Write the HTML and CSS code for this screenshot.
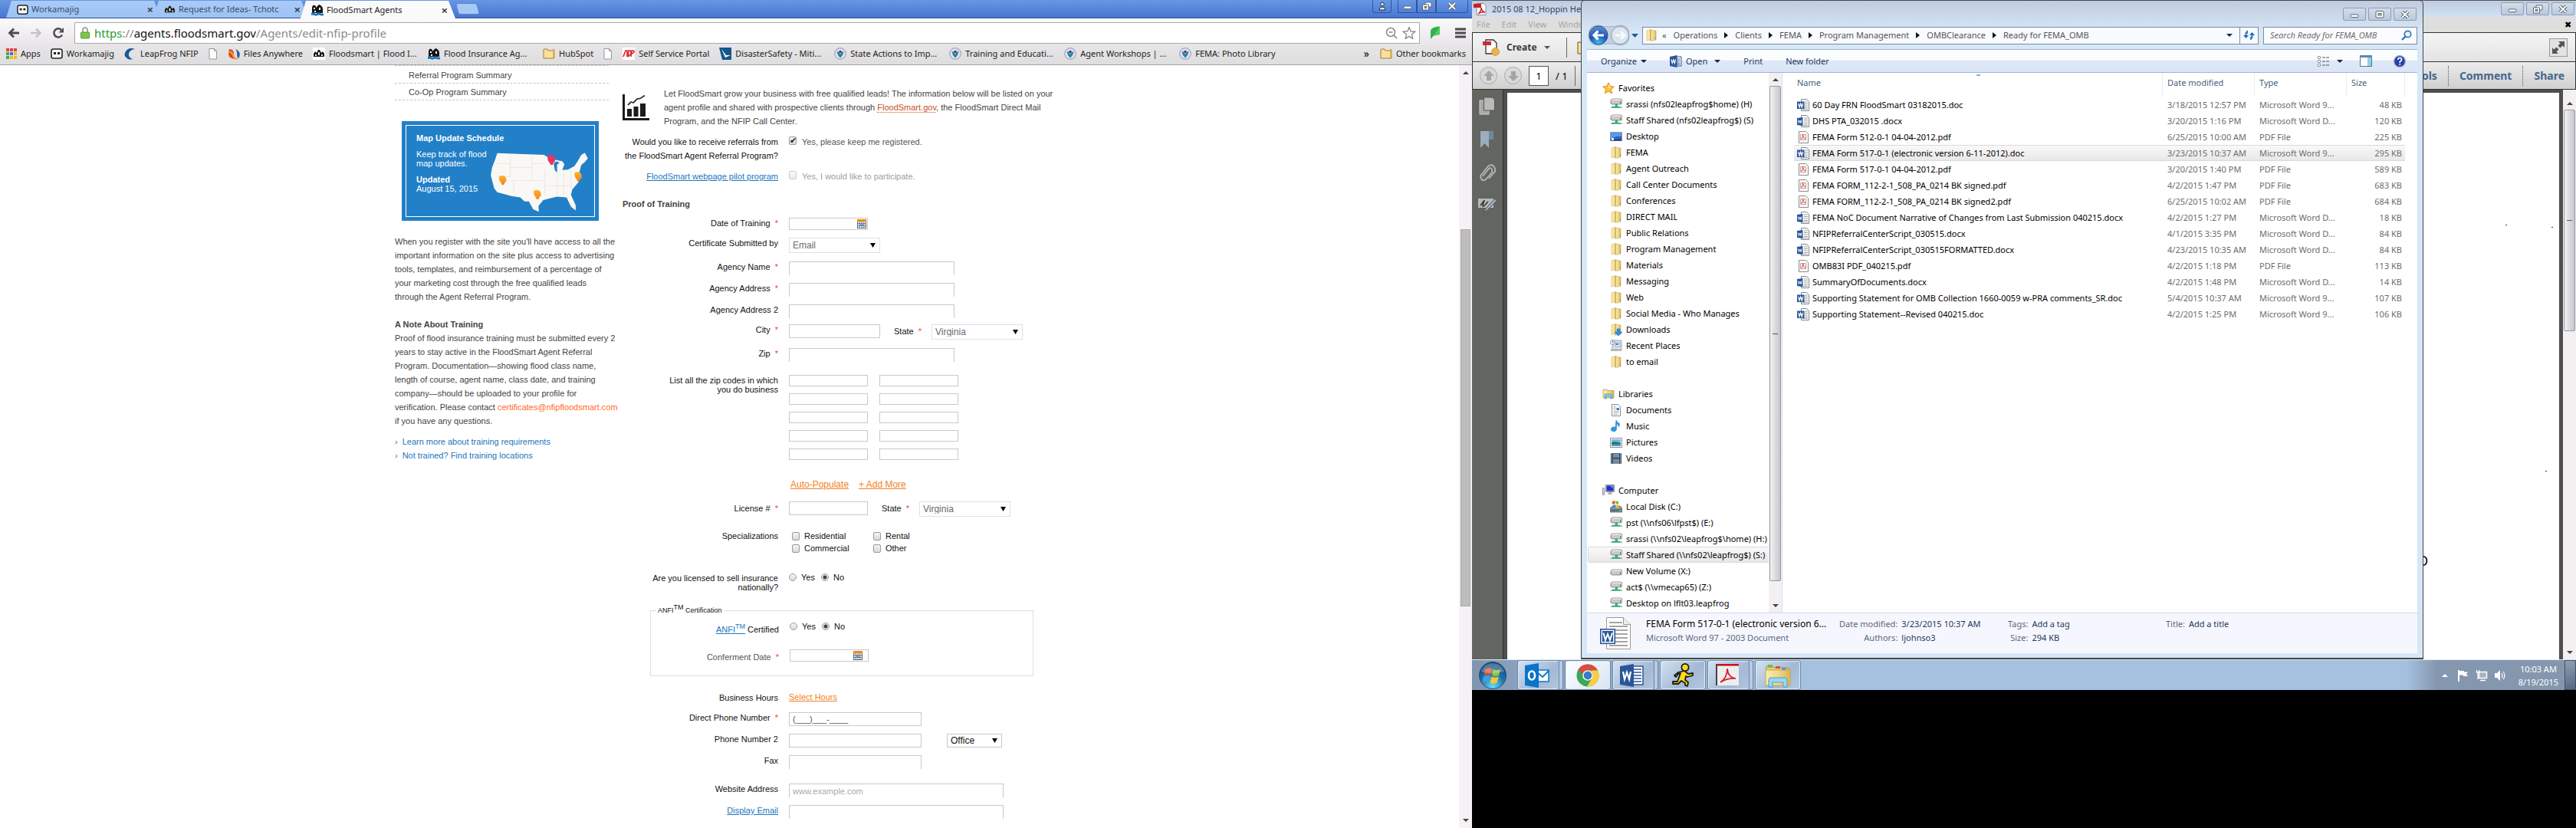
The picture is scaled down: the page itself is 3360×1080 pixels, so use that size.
FILE: index.html
```html
<!DOCTYPE html>
<html lang="en">
<head>
<meta charset="utf-8">
<title>FloodSmart Agents</title>
<link rel="stylesheet" href="styles.css">
</head>
<body>
<svg class="defs" aria-hidden="true">
  <defs>
    <linearGradient id="gold" x1="0" x2="1"><stop offset="0" stop-color="#fbedae"/><stop offset=".5" stop-color="#f0d98a"/><stop offset="1" stop-color="#d9b654"/></linearGradient>
    <radialGradient id="orb" cx=".5" cy=".9" r=".9"><stop offset="0" stop-color="#5fe0ff"/><stop offset=".5" stop-color="#2271ad"/><stop offset="1" stop-color="#14406f"/></radialGradient>
    <linearGradient id="pin" x2="0" y2="1"><stop offset="0" stop-color="#fdb32f"/><stop offset="1" stop-color="#f58220"/></linearGradient>
    <radialGradient id="backblue" cx=".5" cy=".95" r=".9"><stop offset="0" stop-color="#3fc3f5"/><stop offset=".55" stop-color="#1d55b0"/><stop offset="1" stop-color="#5d8fd6"/></radialGradient>
  </defs>
  <symbol id="i-folder" viewBox="0 0 16 16"><path d="M2 2l5-1.500v13L2 15z" fill="#f7e6a3" stroke="#d8bd62" stroke-width=".6"/><path d="M7 .5l4 1.500h3v12l-7 1.500z" fill="url(#gold)" stroke="#c9a647" stroke-width=".6"/><path d="M7 1v14" stroke="#b8963f" stroke-width=".8"/><path d="M13.500 10v3" stroke="#58a3d8"/></symbol>
  <symbol id="i-download" viewBox="0 0 16 16"><use href="#i-folder"/><path d="M9 7h4v4h3l-5 5-5-5h3z" fill="#2b8fe0" stroke="#1768ae" stroke-width=".5"/></symbol>
  <symbol id="i-bmfolder" viewBox="0 0 16 16"><path d="M1 3q0-1 1-1h4l1 2h6q1 0 1 1v9H1z" fill="#fbdf9c" stroke="#a87b30"/><path d="M13 2l2 1v11h-2" fill="#e8b95f" stroke="#a87b30" stroke-width=".7"/></symbol>
  <symbol id="i-netdrive" viewBox="0 0 16 16"><path d="M1 4q0-3 3-3h9q3 0 3 3v2q0 2-3 2H3Q0 8 1 4z" fill="#c9c9cc" stroke="#77777b" stroke-width=".8"/><path d="M2 3.500q1-1.500 3-1.500h7q2 0 3 1.500" fill="none" stroke="#fff"/><path d="M13 4h1v3h-1z" fill="#2a2"/><path d="M7 8h2.500v3H13v1.500H3V11h4z" fill="#29b573" stroke="#128a50" stroke-width=".4"/><path d="M1 12.200h2M13 12.200h3" stroke="#9aa" stroke-width="1.500"/></symbol>
  <symbol id="i-drive" viewBox="0 0 16 16"><path d="M1 9q0-3 3-3h9q3 0 3 3v2q0 2-3 2H3q-3 0-2-4z" fill="#c9c9cc" stroke="#77777b" stroke-width=".8"/><path d="M2 8.500q1-1.500 3-1.500h7q2 0 3 1.500" fill="none" stroke="#fff"/><path d="M13 9h1v3h-1z" fill="#2a2"/></symbol>
  <symbol id="i-windrive" viewBox="0 0 16 16"><path d="M0 10l3-3h10l3 3v5H0z" fill="#8c9398" stroke="#555b60" stroke-width=".7"/><path d="M1 11h14v3H1z" fill="#537687"/><path d="M3 1l3.500-1v4L3 5z" fill="#e5532d"/><path d="M7.500.5L11 1v4L7.500 4z" fill="#7db53c"/><path d="M4 6l3-1v4L4 9.500z" fill="#3f8fd8"/><path d="M7.500 5l4 1v4l-4-1z" fill="#f6c02c"/><path d="M12.500 12h1v2h-1z" fill="#5f5"/></symbol>
  <symbol id="i-desktop" viewBox="0 0 16 16"><path d="M.5 2.500h15v11H.5z" fill="#2c63c6" stroke="#8b97ac"/><path d="M1 3h14v5Q6 7 1 12z" fill="#5c97ea"/><path d="M1 12h14v1.500H1z" fill="#182d55"/><path d="M2 10h3v3H2z" fill="#e8eef8"/></symbol>
  <symbol id="i-recent" viewBox="0 0 16 16"><path d="M5 1h10v13H3V8z" fill="#dfe3e8" stroke="#8a9098" stroke-width=".8"/><path d="M7 4h6v5H7z" fill="#fff" stroke="#6a8fc0" stroke-width=".8"/><path d="M8 5h3v2H8z" fill="#3a77c9"/><path d="M1 12h14v3H1z" fill="#b5b9be"/><circle cx="3.500" cy="3.500" r="3" fill="#eef" stroke="#89a"/><path d="M3.500 1.500v2h1.500" stroke="#456" fill="none" stroke-width=".7"/></symbol>
  <symbol id="i-star" viewBox="0 0 16 16"><path d="M8 .8l2.100 4.800 5.200.5-3.900 3.500 1.200 5.200L8 12.100l-4.600 2.700 1.200-5.200L.7 6.100l5.200-.5z" fill="#fcc53a" stroke="#e08a1c"/><path d="M8 3l1.300 3.400 3 .4L8 8z" fill="#fff2b8"/></symbol>
  <symbol id="i-library" viewBox="0 0 16 16"><path d="M1 2h5l1 1.500h8V13H1z" fill="url(#gold)" stroke="#c39c3c" stroke-width=".8"/><path d="M3 14v-5q0-1 1-1h8q1 0 1 1v5h-2v-3H5v3z" fill="#8fd0ef" stroke="#3d8fc0" stroke-width=".8"/></symbol>
  <symbol id="i-doc" viewBox="0 0 16 16"><path d="M2.500.5h8l3 3v12h-11z" fill="#fff" stroke="#8c8c8c"/><path d="M4.500 3h3M4.500 5h3M4.500 7h3M4.500 9.500h7M4.500 11.500h7M4.500 13.500h5" stroke="#8d98ad" stroke-width=".8"/><path d="M8.500 5h3.500v3H8.500z" fill="#3a77c9"/></symbol>
  <symbol id="i-music" viewBox="0 0 16 16"><path d="M8 0q1 3 4 4 1 2-.500 5 0-3-3-4v7a3.600 3 0 1 1-1.500-2.600z" fill="#2f9be0" stroke="#1c6fae" stroke-width=".5"/></symbol>
  <symbol id="i-picture" viewBox="0 0 16 16"><path d="M.5 2.500h15v12H.5z" fill="#fff" stroke="#8c8c8c"/><path d="M2 4h12v5H2z" fill="#6dbbe8"/><path d="M2 8q5-2 12 1v4H2z" fill="#2c6f64"/><path d="M2 10.500h12V13H2z" fill="#4aa0c8"/></symbol>
  <symbol id="i-video" viewBox="0 0 16 16"><path d="M1 1h14v14H1z" fill="#2e3d4c"/><path d="M4 1.500h8V7H4zM4 8.500h8V15H4z" fill="#4b9fe0"/><path d="M6 3l5 2-2 2H5zM6 10l4 1 1 3H6z" fill="#c96f38"/><path d="M2.300 1v14M13.700 1v14" stroke="#fff" stroke-dasharray="1.200 1"/></symbol>
  <symbol id="i-computer" viewBox="0 0 16 16"><path d="M4.500.5h11v9h-11z" fill="#d9d9da" stroke="#85888c"/><path d="M5.500 1.500h9v7h-9z" fill="#1f31c8"/><path d="M9 1.500h5.500v4z" fill="#5d86f0"/><path d="M8 10h4l1 3H7z" fill="#b5b8bb"/><path d="M.5 4.500h2v9h-2z" fill="#ccd" stroke="#888" stroke-width=".8"/></symbol>
  <symbol id="i-word" viewBox="0 0 16 16"><path d="M5.500.5h7l3 3v12h-10z" fill="#fff" stroke="#7f8790"/><path d="M10 4h4M10 6.500h4M10 9h4M10 11.500h4M7 13.500h7" stroke="#8c949d" stroke-width=".9"/><path d="M0 3.500h9.500v9.500H0z" fill="#2a5699"/><path d="M1.800 5.800l1.300 5 1.600-4.600 1.600 4.600 1.300-5" fill="none" stroke="#fff" stroke-width="1.300"/></symbol>
  <symbol id="i-wordx" viewBox="0 0 16 16"><path d="M5.500.5h7l3 3v12h-10z" fill="#fff" stroke="#7f8790"/><path d="M9 4h5M9 6.500h5M9 9h5M9 11.500h5M7 13.500h7" stroke="#8c949d" stroke-width=".9"/><path d="M0 4l7.500-1v11L0 13z" fill="#2a5699"/><path d="M1.500 6.500l.9 4 1.300-3.500 1.300 3.500 1-4" fill="none" stroke="#fff"/></symbol>
  <symbol id="i-pdf" viewBox="0 0 16 16"><path d="M2.500.5h9l3 3v12h-12z" fill="#fbfbfb" stroke="#8c8c8c"/><path d="M4.500 4.500h7v7h-7z" fill="#fdf1f0" stroke="#c99"/><path d="M5.500 10.500q3-3 2.300-5.500Q7.300 9 11 9.500" fill="none" stroke="#cf3a34"/></symbol>
  <symbol id="i-worda" viewBox="0 0 16 16"><path d="M8 2h7v12H8z" fill="#fff" stroke="#2a5699"/><path d="M9 5h4.500M9 7.500h4.500M9 10h4.500M9 12h4.500" stroke="#2a5699"/><path d="M0 2l9.500-2v16L0 14z" fill="#2a5699"/><path d="M2 5.500l1.200 5L4.800 6l1.500 4.500 1.200-5" fill="none" stroke="#fff" stroke-width="1.200"/></symbol>
  <symbol id="i-seal" viewBox="0 0 16 16"><circle cx="8" cy="8" r="7.300" fill="#dfe0ee" stroke="#a9a3c4" stroke-width="1.200"/><path d="M3.500 5l3 1L8 9l1.500-3 3-1-1.500 5-3 3.500L5 10z" fill="#2a7f9e"/><path d="M6.500 4h3v3h-3z" fill="#3a3f6e"/></symbol>
  <symbol id="i-page" viewBox="0 0 12 16"><path d="M1 1.500h6.500l3 3V15H1z" fill="#fdfdfd" stroke="#999"/><path d="M7.500 1.500v3h3" fill="none" stroke="#999"/></symbol>
  <symbol id="i-work" viewBox="0 0 16 16"><rect x="1" y="2" width="14" height="12" rx="2.500" fill="#fff" stroke="#222" stroke-width="1.600"/><path d="M4 6h3v3H4zM9 6h3v3H9z" fill="#222"/></symbol>
  <symbol id="i-houses" viewBox="0 0 16 16"><path d="M1 12V6q0-4 2.500-4.500L6 3v2l2-2 2-2q4 1 5 5v6z" fill="#151515"/><path d="M3 5h2v2H3zM10 5h2v3h-2zM4 9h2v2H4z" fill="#fff"/><path d="M0 12q2-2 4 0t4 0 4 0 4 0v3q-2 1-4 0t-4 0-4 0-4 0z" fill="#1673b8"/></symbol>
  <symbol id="i-smart" viewBox="0 0 16 16"><path d="M1 12V8l2-3 2 2 2-4h2l2 4 2-2 2 3v4z" fill="#1b1b1b"/><path d="M3 9h2v2H3zM7 6h2v4H7zM11 9h2v2h-2z" fill="#eee"/></symbol>
  <symbol id="i-cal" viewBox="0 0 12 12"><path d="M.5.5h11v11H.5z" fill="#fff" stroke="#5b6670"/><path d="M0 0h12v3.200H0z" fill="#f08a1d"/><path d="M.5 3v9M3.200 3v9M6 3v9M8.800 3v9M11.500 3v9M0 5.700h12M0 8.500h12M0 11.500h12" stroke="#5b6670" stroke-width=".9"/><path d="M3.500 6h2.200v2.200H3.500zM6.300 6h2.200v2.200H6.300z" fill="#5aa9e0"/></symbol>
  <symbol id="i-min" viewBox="0 0 16 12"><rect x="3" y="6" width="10" height="3.500" rx="1" fill="#fff" stroke="#5b6472"/></symbol>
  <symbol id="i-max" viewBox="0 0 16 12"><rect x="3" y="1.500" width="10" height="8.500" rx="1" fill="#fff" stroke="#5b6472"/><rect x="6" y="4.500" width="4" height="2.500" fill="#b8c8dd" stroke="#5b6472"/></symbol>
  <symbol id="i-restore" viewBox="0 0 16 12"><path d="M6 1h8v6h-8z" fill="#fff" stroke="#5b6472"/><path d="M2.500 4h8v7h-8z" fill="#fff" stroke="#5b6472"/><path d="M5 6.500h3v2H5z" fill="#b8c8dd" stroke="#5b6472"/></symbol>
  <symbol id="i-close" viewBox="0 0 16 12"><path d="M4 2l8 8M12 2l-8 8" stroke="#5b6472" stroke-width="4"/><path d="M4 2l8 8M12 2l-8 8" stroke="#fff" stroke-width="1.800"/></symbol>
</svg>

<main class="monitors">
<section class="browser">
  <header class="titlebar">
    <div class="tab"><svg width="15" height="15"><use href="#i-work"/></svg><span>Workamajig</span><button aria-label="Close Workamajig">×</button></div>
    <div class="tab"><svg width="15" height="15"><use href="#i-smart"/></svg><span>Request for Ideas- Tchotc</span><button aria-label="Close Request">×</button></div>
    <div class="tab active"><svg width="16" height="16"><use href="#i-houses"/></svg><span>FloodSmart Agents</span><button aria-label="Close FloodSmart">×</button></div>
    <button class="newtab" aria-label="New tab"></button>
    <div class="chromectl">
      <button class="solo" aria-label="User"><svg width="14" height="14" viewBox="0 0 14 14"><circle cx="7" cy="4.500" r="2.300" fill="#dce8fb" stroke="#234"/><path d="M3 12q0-4 4-4t4 4z" fill="#dce8fb" stroke="#234"/></svg></button>
      <button aria-label="Minimize"><svg width="16" height="12"><use href="#i-min"/></svg></button><button aria-label="Restore"><svg width="16" height="12"><use href="#i-restore"/></svg></button><button class="wide" aria-label="Close window"><svg width="16" height="12"><use href="#i-close"/></svg></button>
    </div>
  </header>
  <nav class="toolbar">
    <button aria-label="Back"><svg width="16" height="16" viewBox="0 0 16 16"><path d="M15 8H3M8 2.500L2.500 8 8 13.500" fill="none" stroke="#4c4c4c" stroke-width="2.800"/></svg></button>
    <button aria-label="Forward"><svg width="16" height="16" viewBox="0 0 16 16"><path d="M1 8h12M8 2.500L13.500 8 8 13.500" fill="none" stroke="#c4c2c4" stroke-width="2.600"/></svg></button>
    <button aria-label="Reload"><svg width="16" height="16" viewBox="0 0 16 16"><path d="M13 10.500A5.600 5.600 0 1 1 12 4" fill="none" stroke="#4c4c4c" stroke-width="2.500"/><path d="M15 1v6.500H8.500z" fill="#4c4c4c"/></svg></button>
    <div class="omnibox">
      <svg width="12" height="16" viewBox="0 0 12 16"><path d="M3 7V4q0-3 3-3t3 3v3" fill="none" stroke="#8f9a8f" stroke-width="1.600"/><rect x=".5" y="7" width="11" height="8" rx="1" fill="#7cc64f" stroke="#549a34"/></svg>
      <span class="url"><i>https</i>://<b>agents.floodsmart.gov</b>/Agents/edit-nfip-profile</span>
      <svg width="16" height="16" viewBox="0 0 16 16"><circle cx="7" cy="7" r="5.500" fill="none" stroke="#888" stroke-width="1.500"/><path d="M4.500 7h5M11 11l4 4" stroke="#888" stroke-width="1.700"/></svg>
      <svg width="18" height="18" viewBox="0 0 16 16"><path d="M8 1.500l1.900 4.600 4.900.4-3.700 3.200 1.100 4.800L8 12l-4.200 2.500 1.100-4.800L1.200 6.500l4.900-.4z" fill="#fff" stroke="#777"/></svg>
    </div>
    <svg class="leaf" width="14" height="18" viewBox="0 0 14 18"><path d="M1 6q1-5 12-5.500V11l-8 1.500L1 17z" fill="#2eb152"/><path d="M13 .5V11l-8 1.500z" fill="#58ca5c"/></svg>
    <button class="menu" aria-label="Menu"><svg width="14" height="14" viewBox="0 0 14 14"><path d="M0 2h14M0 7h14M0 12h14" stroke="#4c4c4c" stroke-width="3"/></svg></button>
  </nav>
  <nav class="bookmarks">
    <a href="#"><svg width="14" height="14" viewBox="0 0 14 14"><path d="M0 0h4v4H0zM10 0h4v4h-4z" fill="#e2453c"/><path d="M5 0h4v4H5z" fill="#e2453c"/><path d="M0 5h4v4H0z" fill="#4aa651"/><path d="M5 5h4v4H5z" fill="#3b78e0"/><path d="M10 5h4v4h-4zM5 10h4v4H5zM10 10h4v4h-4z" fill="#f4b52b"/><path d="M0 10h4v4H0z" fill="#4aa651"/></svg>Apps</a>
    <a href="#"><svg width="16" height="16"><use href="#i-work"/></svg>Workamajig</a>
    <a href="#"><svg width="16" height="16" viewBox="0 0 16 16"><path d="M14 2Q6-1 2 5t3 10q3 1 6 0-6-2-5-7t8-6z" fill="#1b5a93"/></svg>LeapFrog NFIP</a>
    <a href="#" class="blank" aria-label="Page"><svg width="12" height="16"><use href="#i-page"/></svg></a>
    <a href="#"><svg width="16" height="16" viewBox="0 0 16 16"><path d="M2 2q6 0 6 6t6 7Q2 16 1 9q0-4 1-7z" fill="#d94e27"/><path d="M6 1q6 0 6 6t2 7q3-4 1-8T6 1z" fill="#2a5fa5"/><path d="M2 6q4 0 5 4t5 5" fill="none" stroke="#f3a52c" stroke-width="2"/></svg>Files Anywhere</a>
    <a href="#" class="cut"><svg class="white" width="16" height="16"><use href="#i-smart"/></svg>Floodsmart | Flood I...</a>
    <a href="#" class="cut"><svg width="16" height="16"><use href="#i-houses"/></svg>Flood Insurance Ag...</a>
    <a href="#"><svg width="16" height="16"><use href="#i-bmfolder"/></svg>HubSpot</a>
    <a href="#" class="blank" aria-label="Page"><svg width="12" height="16"><use href="#i-page"/></svg></a>
    <a href="#"><svg class="white" width="16" height="16" viewBox="0 0 16 16"><path d="M1 12l3-8h2v8M7 12l1-8h2q3 4-3 8M11 12l1-8h2q3 2-2 4" fill="none" stroke="#e0242b" stroke-width="1.600"/></svg>Self Service Portal</a>
    <a href="#" class="cut"><svg width="16" height="16" viewBox="0 0 16 16"><path d="M0 0h16v16H4z" fill="#12588c"/><path d="M3 2l6 8h6l-7 3z" fill="#fff"/></svg>DisasterSafety - Miti...</a>
    <a href="#" class="cut"><svg width="16" height="16"><use href="#i-seal"/></svg>State Actions to Imp...</a>
    <a href="#" class="cut"><svg width="16" height="16"><use href="#i-seal"/></svg>Training and Educati...</a>
    <a href="#" class="cut"><svg width="16" height="16"><use href="#i-seal"/></svg>Agent Workshops | ...</a>
    <a href="#"><svg width="16" height="16"><use href="#i-seal"/></svg>FEMA: Photo Library</a>
    <button class="more">»</button>
    <a href="#" class="other"><svg width="16" height="16"><use href="#i-bmfolder"/></svg>Other bookmarks</a>
  </nav>
  <div class="viewport">
    <div class="site">
      <aside class="side">
        <ul class="subnav"><li>Referral Program Summary</li><li>Co-Op Program Summary</li></ul>
        <div class="mapcard"><div class="mapinner">
          <div class="maptext"><strong>Map Update Schedule</strong><p>Keep track of flood map updates.</p><p><b>Updated</b><br>August 15, 2015</p></div>
          <svg width="130" height="80" viewBox="245 340 230 235" preserveAspectRatio="none"><path d="M262 345L370 352 382 364 400 372 412 376 417 388 412 410 425 408 440 395 448 375 456 352 464 344 471 365 464 380 456 390 452 415 447 440 450 455 435 485 432 505 443 545 443 565 432 550 422 515 400 512 385 518 368 525 357 548 358 570 345 560 335 530 325 530 315 515 295 510 262 495 255 480 247 430 250 400 257 370z" fill="#faf8f5"/><path d="M392 385l6-8 8 4-6 8v30l-5-8z" fill="#2280c8"/><path d="M262 385h30v-38M292 385v50h-30M292 400h50v-50M342 400v50h-50M300 450v50M342 450h30v60M372 385h-30M372 450v-40M372 470h60M400 420v90M415 415v90M432 410v70" stroke="#e6e0da" stroke-width="1.500" fill="none"/><g fill="url(#pin)"><path id="mp" d="M273 467q-2-11-5-14-6-22 5-22t10 22q-4 3-6 14z"/><use href="#mp" x="80" y="55"/><use href="#mp" x="174" y="-14"/></g><path d="M385 390q-2-9-5-13-6-25 6-25t9 25q-4 4-5 13z" fill="#e6355f"/></svg>
        </div></div>
        <p>When you register with the site you'll have access to all the<br>important information on the site plus access to advertising<br>tools, templates, and reimbursement of a percentage of<br>your marketing cost through the free qualified leads<br>through the Agent Referral Program.</p>
        <h2>A Note About Training</h2>
        <p>Proof of flood insurance training must be submitted every 2<br>years to stay active in the FloodSmart Agent Referral<br>Program. Documentation—showing flood class name,<br>length of course, agent name, class date, and training<br>company—should be uploaded to your profile for<br>verification. Please contact <a class="orange" href="#">certificates@nfipfloodsmart.com</a><br>if you have any questions.</p>
        <ul class="links"><li><a href="#">Learn more about training requirements</a></li><li><a href="#">Not trained? Find training locations</a></li></ul>
      </aside>
      <form class="profile">
        <div class="intro">
          <svg width="35" height="34" viewBox="0 0 35 34"><path d="M1.500 0v32.500H35" fill="none" stroke="#1b1b1b" stroke-width="3"/><path d="M6 19h6v10H6zM14.500 16h6v13h-6zM23 12h7v17h-7z" fill="#1b1b1b"/><path d="M7 14l4-4 3 1 5-5 4-.5 6-4" fill="none" stroke="#333" stroke-width="1.800"/></svg>
          <p>Let FloodSmart grow your business with free qualified leads! The information below will be listed on your<br>agent profile and shared with prospective clients through <a class="dotted" href="#">FloodSmart.gov</a>, the FloodSmart Direct Mail<br>Program, and the NFIP Call Center.</p>
        </div>
        <div class="row tall"><label for="keep">Would you like to receive referrals from<br>the FloodSmart Agent Referral Program?</label><div class="opts"><input type="checkbox" id="keep" checked><span class="gray">Yes, please keep me registered.</span></div></div>
        <div class="row tall pilot"><a class="lab link" href="#">FloodSmart webpage pilot program</a><div class="opts"><input type="checkbox" id="pilot" disabled><label class="faded" for="pilot">Yes, I would like to participate.</label></div></div>
        <h3>Proof of Training</h3>
        <div class="row short"><label for="dot">Date of Training <em>*</em></label><div class="date"><input class="w-s" id="dot"><svg width="12" height="12"><use href="#i-cal"/></svg></div></div>
        <div class="row loose"><label for="cert">Certificate Submitted by</label><select class="w-m" id="cert"><option>Email</option></select></div>
        <div class="row"><label for="an">Agency Name <em>*</em></label><input class="w-l open" id="an"></div>
        <div class="row"><label for="aa">Agency Address <em>*</em></label><input class="w-l open" id="aa"></div>
        <div class="row short"><label for="a2">Agency Address 2</label><input class="w-l open" id="a2"></div>
        <div class="row loose"><label for="city">City <em>*</em></label><div class="inline"><input class="w-m" id="city"><label class="state" for="st1">State <em>*</em></label><select class="w-m" id="st1"><option>Virginia</option></select></div></div>
        <div class="row zip"><label for="zip">Zip <em>*</em></label><input class="w-l open" id="zip"></div>
        <div class="row ziprow"><label for="z1">List all the zip codes in which you do business</label><div class="zips"><input id="z1"><input aria-label="Zip 2"><input aria-label="Zip 3"><input aria-label="Zip 4"><input aria-label="Zip 5"><input aria-label="Zip 6"><input aria-label="Zip 7"><input aria-label="Zip 8"><input aria-label="Zip 9"><input aria-label="Zip 10"></div></div>
        <div class="row"><span></span><div class="ziplinks"><a class="act" href="#">Auto-Populate</a><a class="act" href="#">+ Add More</a></div></div>
        <div class="row lic"><label for="lic">License # <em>*</em></label><div class="inline"><input class="w-s" id="lic"><label class="state" for="st2">State <em>*</em></label><select class="w-m" id="st2"><option>Virginia</option></select></div></div>
        <div class="row spec"><span class="lab">Specializations</span><div class="checks"><label><input type="checkbox">Residential</label><label><input type="checkbox">Rental</label><label><input type="checkbox">Commercial</label><label><input type="checkbox">Other</label></div></div>
        <div class="row nat"><span class="lab">Are you licensed to sell insurance<br>nationally?</span><div class="radios"><label><input type="radio" name="nat">Yes</label><label><input type="radio" name="nat" checked>No</label></div></div>
        <fieldset><legend>ANFI<sup>TM</sup> Certification</legend>
          <div class="row"><span class="lab"><a class="link" href="#">ANFI<sup>TM</sup></a> Certified</span><div class="radios"><label><input type="radio" name="anfi">Yes</label><label><input type="radio" name="anfi" checked>No</label></div></div>
          <div class="row"><label class="gray" for="conf">Conferment Date <em>*</em></label><div class="date conf"><input class="w-s" id="conf"><svg width="12" height="12"><use href="#i-cal"/></svg></div></div>
        </fieldset>
        <div class="row short"><span class="lab">Business Hours</span><a class="act small" href="#">Select Hours</a></div>
        <div class="row"><label for="dp">Direct Phone Number <em>*</em></label><input class="w-p" id="dp" value="(___)___-____"></div>
        <div class="row"><label for="p2">Phone Number 2</label><div class="inline phone"><input class="w-p" id="p2"><select aria-label="Phone type"><option>Office</option></select></div></div>
        <div class="row fax"><label for="fax">Fax</label><input class="w-p open" id="fax"></div>
        <div class="row"><label for="web">Website Address</label><input class="w-x open" id="web" placeholder="www.example.com"></div>
        <div class="row last"><a class="lab link" href="#">Display Email</a><input class="w-x open" aria-label="Display Email"></div>
      </form>
    </div>
    <div class="webscroll"><i class="up"></i><b></b><i class="down"></i></div>
  </div>
</section>

<section class="desktop">
  <div class="workspace">
    <section class="acrobat">
      <header class="a-title"><svg width="17" height="16" viewBox="0 0 17 16"><path d="M4 .5h9l3 3v12H4z" fill="#fff" stroke="#888"/><path d="M0 1h10v5H0z" fill="#c8202a"/><path d="M6 14q4-3 4-8 1 5 5 6-5-1-9 2z" fill="none" stroke="#c8202a" stroke-width="1.400"/></svg><span>2015 08 12_Hoppin Hearing</span>
        <div class="winbtns"><button aria-label="Minimize"><svg width="16" height="12"><use href="#i-min"/></svg></button><button aria-label="Restore"><svg width="16" height="12"><use href="#i-restore"/></svg></button><button aria-label="Close"><svg width="16" height="12"><use href="#i-close"/></svg></button></div></header>
      <nav class="a-menu"><span>File</span><span>Edit</span><span>View</span><span>Window</span><button aria-label="Close document">✖</button></nav>
      <div class="a-bar"><svg width="22" height="22" viewBox="0 0 22 22"><path d="M4 1h10l4 4v14H4z" fill="#fff" stroke="#333" stroke-width="1.300"/><path d="M0 3h11v5H0z" fill="#cf2b33"/><circle cx="16.500" cy="16.500" r="5" fill="#e9b44a" stroke="#bb8425" stroke-dasharray="2 1"/></svg><strong>Create</strong><i class="caret"></i><u></u><svg width="20" height="20" viewBox="0 0 20 20"><path d="M1 3h6l2 2h9v13H1z" fill="#f3e2a0" stroke="#665520"/></svg>
        <button class="expand" aria-label="Read mode"><svg width="20" height="20" viewBox="0 0 20 20"><path d="M10 2h8v8l-2.500-2.500-3 3-3-3 3-3zM10 18H2v-8l2.500 2.500 3-3 3 3-3 3z" fill="#555"/></svg></button></div>
      <div class="a-bar second"><button class="round" aria-label="Previous page"><svg width="14" height="14" viewBox="0 0 14 14"><path d="M7 0l7 7h-4v6H4V7H0z" fill="#a5a5a5"/></svg></button><button class="round" aria-label="Next page"><svg width="14" height="14" viewBox="0 0 14 14"><path d="M7 14l7-7h-4V1H4v6H0z" fill="#a5a5a5"/></svg></button><input aria-label="Page number" value="1"><span>/ 1</span><u></u>
        <div class="a-tabs"><button>Tools</button><button>Comment</button><button>Share</button></div></div>
      <div class="a-body">
        <nav class="a-side">
          <svg width="22" height="24" viewBox="0 0 22 24"><path d="M1 5h12v18H1z" fill="#a8aaa7" stroke="#d0d0d0"/><path d="M6.500 1h11l3 3v14h-14z" fill="#b9bbb8" stroke="#555"/></svg>
          <svg width="22" height="24" viewBox="0 0 22 24"><path d="M10 1h9v11h-7z" fill="#6f8798"/><path d="M2 1h11v22l-5.500-6L2 23z" fill="#9aaebb"/></svg>
          <svg width="22" height="24" viewBox="0 0 22 24"><path d="M5 16L13 6q3-2 4 1t-1 5l-7 8q-4 3-6-1t1-6l8-10q5-4 8 1t-1 8l-6 7" fill="none" stroke="#b3b5b2" stroke-width="1.800"/></svg>
          <svg width="24" height="20" viewBox="0 0 24 20"><path d="M0 1h20v12H0z" fill="#b6b8b5"/><path d="M3 10q6-8 5-6T6 10t7-5" fill="none" stroke="#333" stroke-width="1.500"/><path d="M22 1L10 14l-3 5 5-3L24 4z" fill="#9db0bf" stroke="#556"/></svg>
        </nav>
        <div class="a-page"><span class="mark m1"></span><span class="mark m2"></span><span class="mark m3"></span><span class="glyph">O</span></div>
        <div class="w7scroll a-scroll"><i class="up"></i><b></b><i class="down"></i></div>
      </div>
    </section>

    <section class="explorer">
      <header class="e-title"><div class="winbtns"><button aria-label="Minimize"><svg width="16" height="12"><use href="#i-min"/></svg></button><button aria-label="Maximize"><svg width="16" height="12"><use href="#i-max"/></svg></button><button aria-label="Close"><svg width="16" height="12"><use href="#i-close"/></svg></button></div></header>
      <div class="e-addr">
        <svg width="66" height="28" viewBox="0 0 66 28"><path d="M14 1q14 4 28 0 12 0 12 13T42 27q-14-4-28 0Q1 27 1 14T14 1z" fill="#c4d0df" stroke="#a0aec0"/><circle cx="14" cy="14" r="12" fill="url(#backblue)" stroke="#274a86"/><path d="M21 14H9M13.500 8.500L8 14l5.500 5.500" fill="none" stroke="#fff" stroke-width="3.200"/><circle cx="42" cy="14" r="11.500" fill="#dde5ee" stroke="#8b9bb0"/><path d="M36 14h11M43 9l5 5-5 5" fill="none" stroke="#f7fafd" stroke-width="3"/><path d="M57 12h9l-4.500 5z" fill="#1f5b98"/></svg>
        <div class="crumbs"><svg width="16" height="16"><use href="#i-folder"/></svg><span>«</span><span>Operations</span><i></i><span>Clients</span><i></i><span>FEMA</span><i></i><span>Program Management</span><i></i><span>OMBClearance</span><i></i><span>Ready for FEMA_OMB</span><b class="caret navy"></b><button aria-label="Refresh"><svg width="15" height="14" viewBox="0 0 15 14"><path d="M5 1v3H3.500v4M10 13v-3h1.500V6" fill="none" stroke="#2a7fd0" stroke-width="2"/><path d="M0 7h7l-3.500 4zM8 7h7l-3.500-4z" fill="#2166b8"/></svg></button></div>
        <div class="search"><input aria-label="Search" placeholder="Search Ready for FEMA_OMB"><svg width="14" height="14" viewBox="0 0 14 14"><circle cx="8.500" cy="5.500" r="4.200" fill="#eaf5ff" stroke="#2f75b8" stroke-width="1.700"/><path d="M5.500 8.500L1 13" stroke="#2f75b8" stroke-width="2.400"/></svg></div>
      </div>
      <nav class="e-cmd"><button>Organize<i class="caret navy"></i></button><button><svg width="16" height="16"><use href="#i-worda"/></svg>Open<i class="caret navy"></i></button><button>Print</button><button>New folder</button>
        <div class="e-right"><svg width="15" height="14" viewBox="0 0 15 14"><path d="M.5.500h3v3h-3zM.5 5.500h3v3h-3zM.5 10.500h3v3h-3z" fill="#fff" stroke="#999"/><path d="M6 2h9M6 7h9M6 12h9" stroke="#555" stroke-dasharray="4 1"/></svg><i class="caret navy"></i><svg class="pane" width="16" height="15" viewBox="0 0 16 15"><path d="M.5.500h15v14H.5z" fill="#fff" stroke="#5d7187"/><path d="M0 0h16v3H0z" fill="#5d87b4"/><path d="M10 3h5v11h-5z" fill="#8fd0ec"/></svg><svg width="16" height="16" viewBox="0 0 16 16"><circle cx="8" cy="8" r="7.300" fill="#2240ae" stroke="#97a0b5" stroke-width="1.400"/><path d="M5.700 6q.2-2.500 2.500-2.500T10.600 6Q10.300 7.500 8.200 8.500V10" fill="none" stroke="#fff" stroke-width="1.700"/><path d="M7.400 11h1.700v1.700H7.400z" fill="#fff"/></svg></div></nav>
      <div class="e-body">
        <ul class="tree">
          <li class="h"><svg width="16" height="16"><use href="#i-star"/></svg>Favorites</li>
          <li><svg width="16" height="16"><use href="#i-netdrive"/></svg>srassi (nfs02leapfrog$home) (H)</li>
          <li><svg width="16" height="16"><use href="#i-netdrive"/></svg>Staff Shared (nfs02leapfrog$) (S)</li>
          <li><svg width="16" height="16"><use href="#i-desktop"/></svg>Desktop</li>
          <li><svg width="16" height="16"><use href="#i-folder"/></svg>FEMA</li>
          <li><svg width="16" height="16"><use href="#i-folder"/></svg>Agent Outreach</li>
          <li><svg width="16" height="16"><use href="#i-folder"/></svg>Call Center Documents</li>
          <li><svg width="16" height="16"><use href="#i-folder"/></svg>Conferences</li>
          <li><svg width="16" height="16"><use href="#i-folder"/></svg>DIRECT MAIL</li>
          <li><svg width="16" height="16"><use href="#i-folder"/></svg>Public Relations</li>
          <li><svg width="16" height="16"><use href="#i-folder"/></svg>Program Management</li>
          <li><svg width="16" height="16"><use href="#i-folder"/></svg>Materials</li>
          <li><svg width="16" height="16"><use href="#i-folder"/></svg>Messaging</li>
          <li><svg width="16" height="16"><use href="#i-folder"/></svg>Web</li>
          <li><svg width="16" height="16"><use href="#i-folder"/></svg>Social Media - Who Manages</li>
          <li><svg width="16" height="16"><use href="#i-download"/></svg>Downloads</li>
          <li><svg width="16" height="16"><use href="#i-recent"/></svg>Recent Places</li>
          <li><svg width="16" height="16"><use href="#i-folder"/></svg>to email</li>
          <li class="h gap"><svg width="16" height="16"><use href="#i-library"/></svg>Libraries</li>
          <li><svg width="16" height="16"><use href="#i-doc"/></svg>Documents</li>
          <li><svg width="16" height="16"><use href="#i-music"/></svg>Music</li>
          <li><svg width="16" height="16"><use href="#i-picture"/></svg>Pictures</li>
          <li><svg width="16" height="16"><use href="#i-video"/></svg>Videos</li>
          <li class="h gap"><svg width="16" height="16"><use href="#i-computer"/></svg>Computer</li>
          <li><svg width="16" height="16"><use href="#i-windrive"/></svg>Local Disk (C:)</li>
          <li><svg width="16" height="16"><use href="#i-netdrive"/></svg>pst (\\nfs06\lfpst$) (E:)</li>
          <li><svg width="16" height="16"><use href="#i-netdrive"/></svg>srassi (\\nfs02\leapfrog$\home) (H:)</li>
          <li class="sel"><svg width="16" height="16"><use href="#i-netdrive"/></svg>Staff Shared (\\nfs02\leapfrog$) (S:)</li>
          <li><svg width="16" height="16"><use href="#i-drive"/></svg>New Volume (X:)</li>
          <li><svg width="16" height="16"><use href="#i-netdrive"/></svg>act$ (\\vmecap65) (Z:)</li>
          <li><svg width="16" height="16"><use href="#i-netdrive"/></svg>Desktop on lflt03.leapfrog</li>
        </ul>
        <div class="w7scroll e-scroll"><i class="up"></i><b></b><i class="down"></i></div>
        <div class="files">
          <table>
            <colgroup><col><col class="c-date"><col class="c-type"><col class="c-size"></colgroup>
            <thead><tr><th>Name</th><th>Date modified</th><th>Type</th><th>Size</th></tr></thead>
            <tbody>
              <tr><td><svg width="16" height="16"><use href="#i-word"/></svg>60 Day FRN FloodSmart 03182015.doc</td><td>3/18/2015 12:57 PM</td><td>Microsoft Word 9...</td><td>48 KB</td></tr>
              <tr><td><svg width="16" height="16"><use href="#i-wordx"/></svg>DHS PTA_032015 .docx</td><td>3/20/2015 1:16 PM</td><td>Microsoft Word D...</td><td>120 KB</td></tr>
              <tr><td><svg width="16" height="16"><use href="#i-pdf"/></svg>FEMA Form 512-0-1 04-04-2012.pdf</td><td>6/25/2015 10:00 AM</td><td>PDF File</td><td>225 KB</td></tr>
              <tr class="sel"><td><svg width="16" height="16"><use href="#i-word"/></svg>FEMA Form 517-0-1 (electronic version 6-11-2012).doc</td><td>3/23/2015 10:37 AM</td><td>Microsoft Word 9...</td><td>295 KB</td></tr>
              <tr><td><svg width="16" height="16"><use href="#i-pdf"/></svg>FEMA Form 517-0-1 04-04-2012.pdf</td><td>3/20/2015 1:40 PM</td><td>PDF File</td><td>589 KB</td></tr>
              <tr><td><svg width="16" height="16"><use href="#i-pdf"/></svg>FEMA FORM_112-2-1_508_PA_0214 BK signed.pdf</td><td>4/2/2015 1:47 PM</td><td>PDF File</td><td>683 KB</td></tr>
              <tr><td><svg width="16" height="16"><use href="#i-pdf"/></svg>FEMA FORM_112-2-1_508_PA_0214 BK signed2.pdf</td><td>6/25/2015 10:02 AM</td><td>PDF File</td><td>684 KB</td></tr>
              <tr><td><svg width="16" height="16"><use href="#i-wordx"/></svg>FEMA NoC Document Narrative of Changes from Last Submission 040215.docx</td><td>4/2/2015 1:27 PM</td><td>Microsoft Word D...</td><td>18 KB</td></tr>
              <tr><td><svg width="16" height="16"><use href="#i-wordx"/></svg>NFIPReferralCenterScript_030515.docx</td><td>4/1/2015 3:35 PM</td><td>Microsoft Word D...</td><td>84 KB</td></tr>
              <tr><td><svg width="16" height="16"><use href="#i-wordx"/></svg>NFIPReferralCenterScript_030515FORMATTED.docx</td><td>4/23/2015 10:35 AM</td><td>Microsoft Word D...</td><td>84 KB</td></tr>
              <tr><td><svg width="16" height="16"><use href="#i-pdf"/></svg>OMB83I PDF_040215.pdf</td><td>4/2/2015 1:18 PM</td><td>PDF File</td><td>113 KB</td></tr>
              <tr><td><svg width="16" height="16"><use href="#i-wordx"/></svg>SummaryOfDocuments.docx</td><td>4/2/2015 1:48 PM</td><td>Microsoft Word D...</td><td>14 KB</td></tr>
              <tr><td><svg width="16" height="16"><use href="#i-word"/></svg>Supporting Statement for OMB Collection 1660-0059 w-PRA comments_SR.doc</td><td>5/4/2015 10:37 AM</td><td>Microsoft Word 9...</td><td>107 KB</td></tr>
              <tr><td><svg width="16" height="16"><use href="#i-word"/></svg>Supporting Statement--Revised 040215.doc</td><td>4/2/2015 1:25 PM</td><td>Microsoft Word 9...</td><td>106 KB</td></tr>
            </tbody>
          </table>
        </div>
      </div>
      <footer class="e-info">
        <svg width="40" height="42" viewBox="0 0 40 42"><path d="M8.500.5h22l9 9v32h-31z" fill="#fff" stroke="#999"/><path d="M30.500.5v9h9" fill="#eee" stroke="#999"/><path d="M12 7h17M12 12h24M20 17h16M20 22h16M20 27h16M20 32h16M12 37h24" stroke="#888" stroke-width="1.300"/><rect x=".8" y="15.800" width="18.500" height="18.500" fill="#fff" stroke="#2a5699" stroke-width="1.600"/><path d="M3 18h14v14H3z" fill="#2a5699"/><path d="M4.500 20.500L7 30l3-8 3 8 3-9.500" fill="none" stroke="#fff" stroke-width="2"/></svg>
        <div class="i-name"><strong>FEMA Form 517-0-1 (electronic version 6...</strong><span>Microsoft Word 97 - 2003 Document</span></div>
        <dl class="i-date"><dt>Date modified:</dt><dd>3/23/2015 10:37 AM</dd><dt>Authors:</dt><dd>ljohnso3</dd></dl>
        <dl class="i-tags"><dt>Tags:</dt><dd>Add a tag</dd><dt>Size:</dt><dd>294 KB</dd></dl>
        <dl><dt>Title:</dt><dd>Add a title</dd></dl>
      </footer>
    </section>
  </div>
  <footer class="taskbar">
    <button class="orb" aria-label="Start"><svg width="38" height="38" viewBox="0 0 38 38"><circle cx="19" cy="19" r="17.500" fill="url(#orb)" stroke="#2b4d70"/><path d="M9 11q5-3 9-.5l-1.500 8q-4-2-9 .5z" fill="#e8532a"/><path d="M19.500 11q5 2.500 9.500 0l-2 8q-4 2.500-9-.5z" fill="#8cc63c"/><path d="M7 20.500q5-2.500 9-.5l-2 8q-4-2-8.500.5z" fill="#3fa0e0"/><path d="M17.500 20.500q5 2.500 9.500 0l-2.500 8q-5 2.500-9-.5z" fill="#fcc52c"/><path d="M4 14Q8 3 19 3t15 11q-15 4-30 0z" fill="#fff" opacity=".25"/></svg></button>
    <button class="app stack" aria-label="Outlook"><svg width="32" height="32" viewBox="0 0 32 32"><path d="M15 9h16v15H15z" fill="#fff" stroke="#0a74c8" stroke-width="1.500"/><path d="M15 11l8 7 8-8" fill="none" stroke="#0a74c8" stroke-width="1.800"/><path d="M0 3l18-3v32L0 29z" fill="#0a74c8"/><ellipse cx="9" cy="16" rx="4" ry="5.500" fill="none" stroke="#fff" stroke-width="2.600"/></svg></button>
    <button class="app on" aria-label="Chrome"><svg width="30" height="30" viewBox="0 0 30 30"><circle cx="15" cy="15" r="14.500" fill="#3ba757"/><path d="M2.500 7.500A14.500 14.500 0 0 1 28 8.500H15q-5 0-6.500 4.500z" fill="#dd4b3e"/><path d="M28 8.500A14.500 14.500 0 0 1 14 29.500L21 18q2-5-2-9.500z" fill="#fccd3c"/><circle cx="15" cy="15" r="6.800" fill="#fff"/><circle cx="15" cy="15" r="5.400" fill="#3b7cc9"/></svg></button>
    <button class="app stack" aria-label="Word"><svg width="32" height="30" viewBox="0 0 32 30"><path d="M16 3h14v24H16z" fill="#fff" stroke="#2a5699" stroke-width="1.500"/><path d="M18 7h10M18 11h10M18 15h10M18 19h10M18 23h10" stroke="#2a5699" stroke-width="1.600"/><path d="M0 3l18-3v30L0 27z" fill="#2a5699"/><path d="M4 10l2 10 3-9 3 9 2-10" fill="none" stroke="#fff" stroke-width="2.200"/></svg></button>
    <button class="app" aria-label="AIM"><svg width="30" height="32" viewBox="0 0 30 32"><g fill="#ffd91c" stroke="#1a1a1a" stroke-width="1.800" stroke-linejoin="round"><path d="M9 12l8-2 5 4 6-1v3l-7 2-2-1-1 5 4 3-1 5-3-1v-3l-5-3-4 4H2v-3h6l4-11-3 1-3 4-2-2z"/><circle cx="18" cy="5.500" r="4.600"/></g></svg></button>
    <button class="app stack" aria-label="Acrobat"><svg width="30" height="30" viewBox="0 0 30 30"><path d="M0 0h30v28H0z" fill="#eee"/><path d="M0 0h30v2.500H0z" fill="#c8101c"/><path d="M0 0h2v28H0z" fill="#444"/><path d="M6 24q9-6 9-18 1 12 11 13-11-1-20 5z" fill="none" stroke="#d2202c" stroke-width="1.700"/></svg></button>
    <button class="app" aria-label="Explorer"><svg width="34" height="32" viewBox="0 0 34 32"><path d="M2 4h8l2 2h19v22H2z" fill="#e8cf78" stroke="#b3923f"/><path d="M4 2h6v4H4z" fill="#6fbf4a"/><path d="M14 4h6v3h-6z" fill="#d8553a"/><path d="M22 6h6v3h-6z" fill="#4a9bdc"/><path d="M1 9h32v20H1z" fill="url(#gold)" stroke="#c9a647"/><path d="M5 31v-9q0-3 3-3h18q3 0 3 3v9h-5v-6H10v6z" fill="#9bd7f2" stroke="#4d9cc9"/></svg></button>
    <div class="tray">
      <i class="up"></i>
      <svg width="16" height="16" viewBox="0 0 16 16"><path d="M2 1v15" stroke="#fff" stroke-width="2"/><path d="M3 2h6v1.500h5L12 6l2 3H8V7.500H3z" fill="#fff"/></svg>
      <svg width="16" height="16" viewBox="0 0 16 16"><path d="M4.500 3.500h10v8h-10z" fill="#a9b2bf" stroke="#fff" stroke-width="1.500"/><path d="M6 14.500h7M1.500 1v3h3V1M3 4v9" stroke="#fff" stroke-width="1.300" fill="none"/></svg>
      <svg width="16" height="16" viewBox="0 0 16 16"><path d="M1 5h3l4-4v14l-4-4H1z" fill="#fff"/><path d="M10 5q2 3 0 6M12 3q4 5 0 10" stroke="#fff" fill="none" stroke-width="1.200"/></svg>
      <time>10:03 AM<br>8/19/2015</time>
      <button class="peek" aria-label="Show desktop"></button>
    </div>
  </footer>
</section>
</main>
</body>
</html>
```
FILE: styles.css
```css
* { box-sizing: border-box; }
body { margin: 0; background: #000; font: 11px/14px "Noto Sans", "Open Sans", sans-serif; color: #000; }
button { font: inherit; color: inherit; padding: 0; border: 0; background: none; }
input, select { font: inherit; }
ul, dl, dd, p, h2, h3 { margin: 0; padding: 0; list-style: none; }
svg { display: block; flex: none; }
.defs { position: absolute; width: 0; height: 0; }
.monitors { display: grid; grid-template-columns: 4fr 3fr; align-items: start; }

/* browser chrome */
.browser { display: flex; flex-direction: column; min-height: 100vh; min-width: 0; background: #fff; }
.titlebar { display: flex; align-items: flex-end; height: 24px; padding-left: 8px; background: linear-gradient(#6797e2, #4775d3); border-bottom: 1px solid #2c4f98; }
.tab { display: flex; align-items: center; gap: 4px; width: 202px; height: 22px; margin-right: -10px; padding: 0 10px 0 14px; background: linear-gradient(#a9cbf7, #9cc3f5); clip-path: polygon(7px 0, 193px 0, 100% 100%, 0 100%); white-space: nowrap; color: #3d4a60; }
.tab span { flex: 1; overflow: hidden; }
.tab button { font-size: 15px; font-weight: 700; color: #444; }
.tab.active { background: #fbfafb; height: 23px; margin-bottom: -1px; color: #222; }
.newtab { width: 28px; height: 15px; margin: 0 0 4px 12px; background: #a5c8f6; border: 1px solid #5a86cf; border-radius: 3px; transform: skewX(15deg); }
.chromectl { display: flex; align-self: flex-start; margin-left: auto; padding-right: 5px; }
.chromectl button { display: flex; align-items: center; justify-content: center; width: 25px; height: 17px; border: 1px solid #30549f; border-top: 0; }
.chromectl button.wide { width: 42px; border-radius: 0 0 4px 0; }
.chromectl .solo { margin-right: 8px; border-radius: 0 0 4px 4px; }
.toolbar { display: flex; align-items: center; height: 34px; padding: 3px 8px 0 10px; gap: 13px; background: linear-gradient(#fbfafb, #eae6ea); }
.omnibox { display: flex; align-items: center; gap: 6px; flex: 1; height: 28px; padding: 0 4px 0 7px; background: #fff; border: 1px solid #a9a9a9; }
.url { flex: 1; font-size: 15px; line-height: 20px; color: #8a8a8a; }
.url i { font-style: normal; color: #2a9a2a; }
.url b { font-weight: 400; color: #111; }
.menu { margin-left: 6px; }
.bookmarks { display: flex; align-items: center; height: 27px; padding: 0 8px 2px; background: linear-gradient(#e8e5e8, #dedede); border-bottom: 1px solid #a5a5a5; white-space: nowrap; }
.bookmarks a { display: flex; align-items: center; gap: 5px; padding-right: 13px; color: #222; text-decoration: none; }
.bookmarks .blank { padding-right: 13px; }
.bookmarks .cut { width: 150px; padding-right: 0; }
.bookmarks .white { background: #fff; }
.bookmarks .more { margin-left: auto; padding-right: 14px; font-size: 14px; }
.bookmarks .other { padding-right: 0; }

/* page */
.viewport { flex: 1; display: flex; font-family: "Liberation Sans", Arial, sans-serif; line-height: 18px; color: #444; }
.site { flex: 1; display: flex; justify-content: center; gap: 18px; }
.side { width: 279px; white-space: nowrap; }
.subnav li { height: 22px; line-height: 22px; padding-left: 18px; border-bottom: 1px dashed #c4c4c4; }
.subnav { padding-top: 1px; border-top: 1px dashed #c4c4c4; }
.mapcard { width: 257px; height: 130px; margin: 27px 0 18px 9px; padding: 5px; background: #2280c8; color: #fff; line-height: 12px; }
.mapinner { display: flex; height: 100%; padding: 10px 0 0 13px; border: 1px solid #fff; }
.maptext { width: 96px; }
.maptext p { margin-top: 9px; white-space: normal; }
.mapinner svg { margin-top: 24px; }
.side h2 { margin-top: 18px; font-size: 11px; font-weight: 700; }
.orange { color: #ff6a2b; text-decoration: none; }
.links { margin-top: 9px; }
.links a { color: #2475bd; text-decoration: none; }
.links a::before { content: "›"; padding-right: 6px; }
.profile { width: 576px; padding-top: 28px; }
.intro { display: flex; gap: 19px; white-space: nowrap; }
.intro svg { margin-top: 10px; }
.dotted { color: #c9501c; text-decoration: none; border-bottom: 1px dotted #c9501c; }
h3 { height: 27px; font-size: 11px; font-weight: 700; }
.row { display: grid; grid-template-columns: 203px 1fr; column-gap: 14px; align-items: start; justify-items: start; min-height: 28px; color: #111; line-height: 12px; }
.row > :first-child { justify-self: end; text-align: right; padding-top: 1px; }
.row em { font-style: normal; color: #f0453a; padding-left: 3px; }
.row.short { min-height: 26px; }
.row.loose { min-height: 31px; }
.row.tall { margin-top: 9px; min-height: 36px; line-height: 18px; }
.row.tall > :first-child { padding-top: 0; }
.row.zip { min-height: 35px; }
.link { color: #2475bd; }
.gray { color: #555; }
.faded { color: #a59c9c; }
.opts { display: flex; align-items: flex-start; gap: 7px; }
input[type=checkbox], input[type=radio] { appearance: none; width: 10px; height: 11px; margin: 0; border: 1px solid #9b9b9b; border-radius: 2px; background: linear-gradient(#f4f4f4, #d9d9d9); }
.opts input { margin-top: 2px; }
.opts input:disabled { opacity: .5; }
input[type=checkbox]:checked::before { content: "✔"; display: block; font: 11px/9px "DejaVu Sans", sans-serif; color: #222; }
input[type=radio] { height: 10px; border-radius: 50%; }
input[type=radio]:checked { background: radial-gradient(#444 0 2px, #e5e5e5 3px); }
.profile input:not([type]), .profile select { height: 18px; padding: 0 4px; border: 1px solid #c9c9c9; border-radius: 0; background: #fff; color: #555; }
.profile input.open { border-bottom: 0; }
.profile select { height: 20px; appearance: none; border-color: #dfe0ea; font-size: 12px; color: #6a6a6a; background: #fff url("data:image/svg+xml,%3Csvg xmlns='http://www.w3.org/2000/svg' width='8' height='6'%3E%3Cpath d='M0 0h7L3.500 6z'/%3E%3C/svg%3E") no-repeat right 4px center; }
.profile .w-s { width: 103px; }
.profile .w-m { width: 119px; }
.profile .w-l { width: 216px; }
.profile .w-p { width: 173px; }
.profile .w-x { width: 280px; }
.date { display: flex; align-items: center; }
.profile .date input { height: 16px; }
.date svg { margin-left: -14px; }
.conf svg { margin-left: -20px; }
.inline { display: flex; align-items: flex-start; }
.state { flex: none; width: 67px; padding: 3px 0 0 18px; text-align: left; }
.ziprow label { width: 150px; }
.ziprow { min-height: 137px; }
.zips { display: grid; grid-template-columns: 103px 103px; gap: 9px 15px; }
.profile .zips input { height: 15px; }
.ziplinks { display: flex; gap: 13px; padding-left: 2px; }
.act { color: #f47f20; font-size: 12px; }
.act.small { font-size: 11px; }
.row.lic { min-height: 38px; }
.row.lic > label { padding-top: 3px; }
.row.spec { min-height: 55px; }
.checks { display: grid; grid-template-columns: 106px 90px; row-gap: 4px; padding: 1px 0 0 4px; }
.checks label, .radios label { display: flex; gap: 6px; align-items: center; }
.radios { display: flex; gap: 8px; }
.row.nat { min-height: 43px; }
fieldset { margin: 0 40px 21px 36px; padding: 9px 0 0 0; height: 92px; border: 1px solid #dedede; font-size: 11px; }
legend { margin-left: 7px; padding: 0 2px; font-size: 9px; line-height: 12px; color: #111; }
sup { font-size: 9px; line-height: 0; }
fieldset .row { grid-template-columns: 167px 1fr; min-height: 36px; }
fieldset .row > :first-child { padding-top: 4px; }
.phone select { width: 72px; height: 18px; margin-left: 33px; border-color: #c9c9c9; color: #111; }
.row.fax { min-height: 37px; }
.row.last { min-height: 18px; }
.profile input::placeholder { color: #a9a9a9; }
.webscroll { display: flex; flex-direction: column; align-items: center; width: 17px; padding: 8px 0; background: #f5f1f5; }
.webscroll b { width: 13px; height: 492px; margin-top: 202px; background: #bdbdbd; border: 1px solid #a9a9a9; }
.up, .down { width: 0; height: 0; border: 4px solid transparent; }
.up { border-bottom-color: #444; border-top: 0; }
.down { border-top-color: #444; border-bottom: 0; margin-top: auto; }

/* second monitor */
.desktop { display: flex; flex-direction: column; aspect-ratio: 16 / 10; min-width: 0; overflow: hidden; }
.workspace { position: relative; flex: 1; min-height: 0; }
.caret { display: inline-block; width: 0; height: 0; border: 4px solid transparent; border-top-color: #555; border-bottom: 0; }
.caret.navy { border-top-color: #16294f; }
.winbtns { display: flex; gap: 3px; margin-left: auto; }
.winbtns button { display: flex; align-items: center; justify-content: center; width: 30px; height: 17px; border: 1px solid #8e9cb3; border-radius: 2px; background: linear-gradient(#d3ddea, #bac9dd); }

.acrobat { display: flex; flex-direction: column; height: 100%; background: #dedede; }
.a-title { display: flex; align-items: center; gap: 7px; height: 22px; padding: 0 2px; border-top: 1px solid #555; background: linear-gradient(#bfcce0, #d2e1f4); color: #3a4350; font-size: 11px; white-space: nowrap; }
.a-menu { display: flex; align-items: center; gap: 15px; height: 20px; padding: 0 6px; color: #a6a6a6; font-size: 11px; }
.a-menu button { margin-left: auto; color: #000; }
.a-bar { display: flex; align-items: center; gap: 9px; height: 38px; padding: 0 10px 0 13px; border: solid #333; border-width: 1px 1px 0 1px; background: linear-gradient(#f5f5f5, #e3e3e3); font-size: 13px; }
.a-bar strong { font-weight: 700; color: #3c3c3c; font-size: 12px; }
.a-bar u { width: 1px; height: 26px; margin: 0 4px 0 12px; background: #666; }
.expand { margin-left: auto; width: 24px; height: 24px; padding: 1px; border: 1px solid #999; background: #e2e2e2; }
.a-bar.second { padding: 0 14px 0 9px; height: 37px; border-bottom: 1px solid #333; background: linear-gradient(#ececec, #cfcfcf); }
.round { display: flex; align-items: center; justify-content: center; width: 23px; height: 23px; border: 1px solid #aaa; border-radius: 50%; background: #d9d9d9; }
.a-bar.second input { width: 26px; height: 26px; padding: 0; border: 1px solid #555; text-align: center; background: #fff; }
.a-bar.second u { margin: 0; }
.a-tabs { display: flex; margin-left: auto; font-size: 14px; font-weight: 700; color: #46678f; }
.a-tabs button { height: 26px; padding: 0 14px; border-left: 1px dotted #555; }
.a-tabs button:first-child { border: 0; }
.a-tabs button:last-child { padding-right: 0; }
.a-body { flex: 1; display: flex; min-height: 0; background: #4d504d; }
.a-side { width: 41px; display: flex; flex-direction: column; align-items: center; gap: 20px; padding-top: 9px; background: #636561; border-right: 1px solid #2e2e2e; }
.a-page { position: relative; flex: 1; margin: 4px 5px 0; background: #fff; }
.mark { position: absolute; width: 2px; height: 1px; background: #333; }
.m1 { right: 68px; top: 172px; }
.m2 { right: 8px; top: 175px; }
.m3 { right: 16px; top: 493px; }
.glyph { position: absolute; right: 171px; top: 601px; font: 18px/20px "Liberation Sans", sans-serif; }
.w7scroll { display: flex; flex-direction: column; align-items: center; width: 17px; padding: 7px 0; background: #f3eff3; }
.w7scroll b { width: 15px; border: 1px solid #999; border-radius: 2px; background: linear-gradient(#555, #555) center / 7px 1px no-repeat, linear-gradient(90deg, #f2f2f4, #c5c5cb); }
.a-scroll { padding-top: 16px; }
.a-scroll b { height: 289px; margin-top: 6px; }

.explorer { position: absolute; left: 142px; right: 199px; top: 0; bottom: 0; display: flex; flex-direction: column; padding: 0 7px 6px; border: 1px solid #444; border-bottom-width: 2px; border-radius: 5px 5px 0 0; background: linear-gradient(#c0ccdf, #d6e7f7 40px); }
.e-title { height: 31px; padding: 9px 1px 0; display: flex; }
.e-addr { display: flex; align-items: center; height: 28px; margin-bottom: 4px; padding-left: 1px; color: #555; }
.crumbs { flex: 1; display: flex; align-items: center; gap: 9px; height: 23px; margin: 0 6px 0 5px; padding-left: 3px; border: 1px solid #808a99; background: #f7faff; }
.crumbs svg { margin-right: -3px; }
.crumbs button svg { margin: 0; }
.crumbs i { width: 0; border: 4px solid transparent; border-left: 5px solid #111; border-right: 0; }
.crumbs b { margin-left: auto; }
.crumbs button { height: 100%; padding: 3px 4px; border-left: 1px solid #808a99; }
.search { display: flex; align-items: center; width: 201px; height: 23px; padding: 0 6px 0 8px; border: 1px solid #808a99; background: #fafcff; }
.search input { flex: 1; min-width: 0; padding: 0; border: 0; background: none; font-style: italic; }
.search input::placeholder { color: #6d6d6d; }
.e-cmd { display: flex; align-items: center; gap: 30px; height: 31px; padding: 0 15px 0 18px; border-top: 1px solid #9fb7d2; border-bottom: 1px solid #a4b3ce; background: linear-gradient(#fbfdff 0 45%, #dfe8f7 50%, #d9e5f6); color: #1e395b; }
.e-cmd button { display: flex; align-items: center; gap: 5px; }
.e-cmd button:nth-child(2) .caret { margin-left: 4px; }
.e-right { display: flex; align-items: center; gap: 10px; margin-left: auto; }
.e-right .pane { margin: 0 18px 0 12px; }
.e-body { flex: 1; display: flex; min-height: 0; background: #fff; overflow: hidden; }
.tree { width: 237px; padding-top: 9px; overflow: hidden; border-left: 1px solid #fff; }
.tree li { display: flex; align-items: center; gap: 5px; height: 21px; padding-left: 29px; white-space: nowrap; overflow: hidden; }
.tree .h { padding-left: 19px; }
.tree .gap { margin-top: 21px; }
.tree .sel { border: 1px solid #dadada; border-right: 0; border-radius: 3px 0 0 3px; padding-left: 28px; background: linear-gradient(#fafafa, #e9e6e9); }
.e-scroll b { height: 646px; margin-top: 6px; }
.files { flex: 1; padding: 0 16px 0 15px; border-left: 1px solid #d6e0ef; }
table { width: 100%; table-layout: fixed; border-spacing: 0; white-space: nowrap; }
.c-date, .c-type { width: 120px; }
.c-size { width: 76px; }
th { height: 31px; padding: 0 0 5px 6px; text-align: left; font-weight: 400; color: #4c607a; border-right: 1px solid #e3edf8; }
th:first-child { padding-left: 4px; background: linear-gradient(#7fb5d5, #7fb5d5) center 2px / 5px 2px no-repeat; }
td { height: 21px; padding: 0 0 0 6px; color: #6d6d6d; }
td:first-child { display: flex; align-items: center; gap: 4px; padding-left: 4px; color: #000; }
td:last-child { text-align: right; padding-right: 4px; }
.sel td { background: linear-gradient(#fafafa, #e9e6e9); box-shadow: inset 0 1px #dadada, inset 0 -1px #dadada; }
.e-info { display: flex; align-items: flex-start; height: 53px; padding: 5px 0 0 17px; border-top: 1px solid #ccd8ec; background: #f6f7fe; color: #5a6779; line-height: 18px; white-space: nowrap; }
.i-name { width: 252px; margin-left: 20px; display: flex; flex-direction: column; }
.i-name strong { font-weight: 400; font-size: 12px; color: #000; }
dl { display: grid; grid-template-columns: auto auto; column-gap: 5px; }
dt { text-align: right; }
dd { color: #1e395b; }
.i-date { width: 220px; justify-content: start; }
.i-tags { width: 206px; justify-content: start; }

.taskbar { display: flex; height: 40px; padding-left: 8px; border-top: 1px solid #dce8f5; background: linear-gradient(90deg, #8094ae, #8aa1bf 60px, #a4c1df 440px); color: #fff; }
.orb { width: 38px; margin-right: 13px; }
.app { display: flex; align-items: center; justify-content: center; width: 60px; margin-right: 2px; border: 1px solid #6d87a8; border-radius: 3px; background: linear-gradient(135deg, #d5e2f1, #a3b9d4 60%, #b5c9e0); box-shadow: inset 0 0 0 1px #dfeaf6; }
.app.on { background: linear-gradient(135deg, #fff, #d7e4f4); }
.app.stack { padding-right: 8px; box-shadow: inset -5px 0 0 -1px #b9cce2, inset -5px 0 #6d87a8, inset 0 0 0 1px #dfeaf6; }
.tray { display: flex; align-items: center; gap: 8px; margin-left: auto; padding-left: 46px; background: linear-gradient(90deg, transparent, #8497ae 40px); text-align: center; line-height: 17px; }
.tray .up { margin-right: 4px; border-bottom-color: #fff; }
.tray time { margin-left: 8px; }
.peek { width: 15px; height: 100%; border: 1px solid #3f4f63; background: linear-gradient(160deg, #8fa0b5, #55677f); }
```
